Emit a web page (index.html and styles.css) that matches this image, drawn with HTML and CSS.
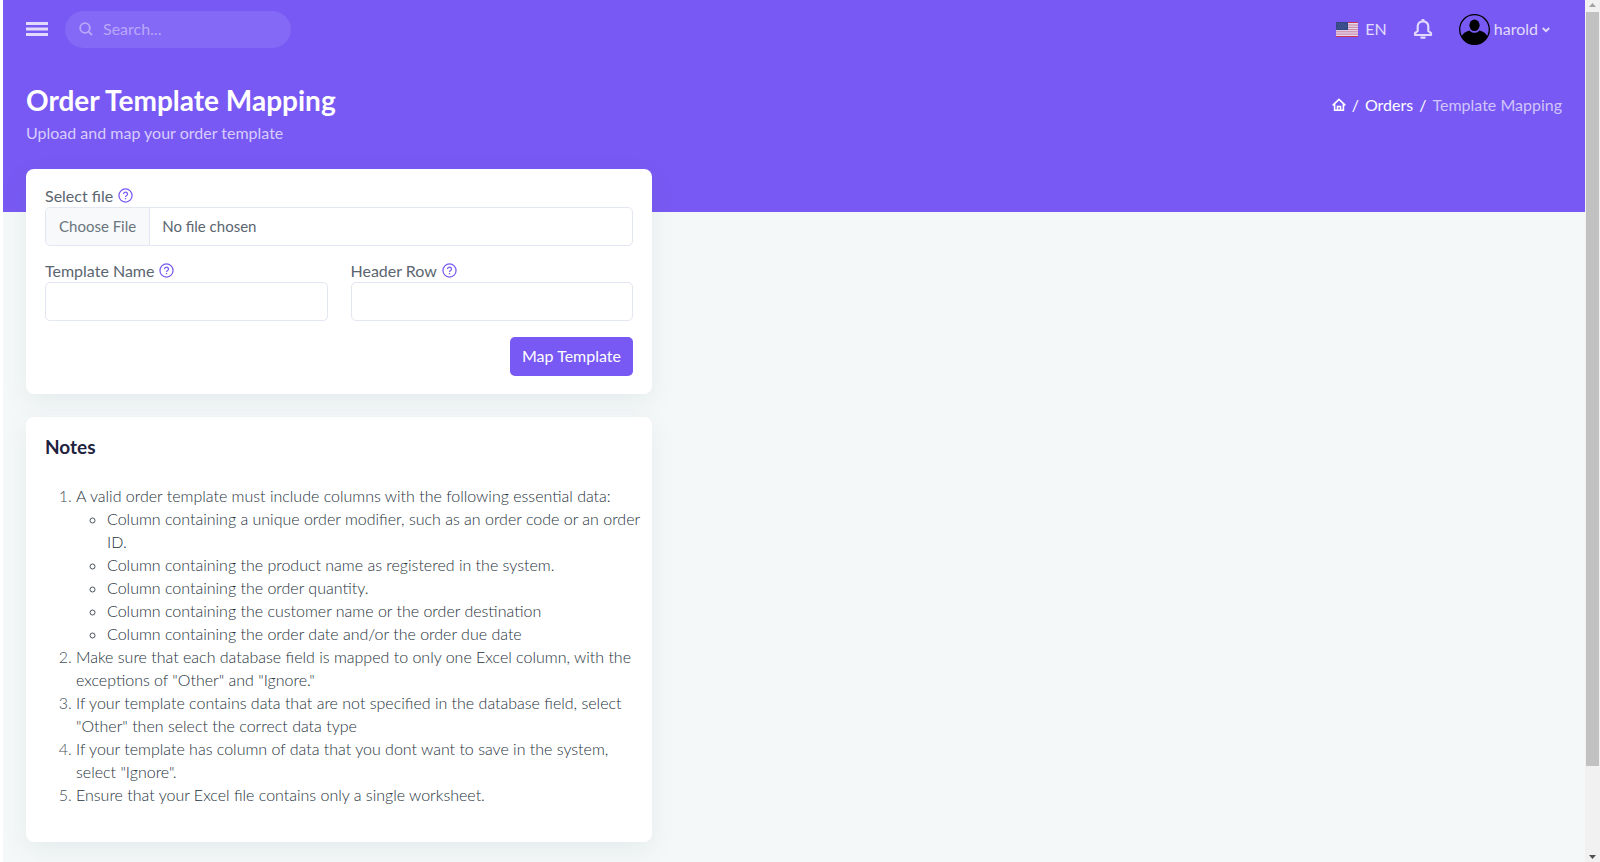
FILE: index.html
```html
<!DOCTYPE html>
<html lang="en">
<head>
  <meta charset="UTF-8">
  <meta name="viewport" content="width=device-width, initial-scale=1">
  <title>Order Template Mapping</title>
  <link rel="stylesheet" href="styles.css">
</head>
<body>

<svg class="sprite" aria-hidden="true">
  <symbol id="icon-help" viewBox="0 0 24 24">
    <circle cx="12" cy="12" r="10.5" fill="none" stroke="currentColor" stroke-width="2"/>
    <path d="M8.8 9.8a3.2 3 0 1 1 5 2.3c-1.2.8-1.8 1.2-1.8 2.3" fill="none" stroke="currentColor" stroke-width="2"/>
    <rect x="11" y="16" width="2" height="2" fill="currentColor"/>
  </symbol>
</svg>

<div class="app">
  <div class="sidebar-edge"></div>

  <div class="content">
    <header class="topbar">
      <button class="menu-btn" type="button" aria-label="Toggle menu">
        <svg width="22" height="16" viewBox="0 0 22 16"><path d="M0 2.500h22M0 8h22M0 13.500h22" stroke="currentColor" stroke-width="3"/></svg>
      </button>
      <label class="search">
        <svg width="14" height="14" viewBox="0 0 14 14" fill="none" stroke="currentColor" stroke-width="1.800"><circle cx="6" cy="6" r="4.800"/><path d="M9.600 9.600l3.400 3.400"/></svg>
        <input type="text" placeholder="Search..." aria-label="Search">
      </label>

      <div class="topbar-right">
        <button class="lang" type="button">
          <svg class="flag" width="22" height="15" viewBox="0 0 22 15">
            <rect width="22" height="15" fill="#f0e6ee"/>
            <path d="M0 .5h22M0 14.500h22" stroke="#d6303f"/>
            <path d="M0 3h22M0 5.300h22M0 7.600h22M0 9.800h22M0 12.100h22" stroke="#d08496"/>
            <rect width="12" height="8" fill="#2c4478"/>
            <path d="M1 2h10M2 4h9M1 6h10" stroke="#56699a" stroke-dasharray="1 1"/>
          </svg>
          <span>EN</span>
        </button>
        <button class="bell" type="button" aria-label="Notifications">
          <svg width="20" height="20" viewBox="0 0 20 20" fill="none" stroke="currentColor" stroke-width="2.200"><path d="M10 2.400c-3.300 0-5.300 2.200-5.300 5.200v4.400L2 14.200V16h16v-1.800L15.300 12V7.600c0-3-2-5.200-5.300-5.200z" stroke-linejoin="round"/><path d="M9.500 1.200h1M8.300 18.600h3.400" stroke-linecap="round"/></svg>
        </button>
        <button class="user" type="button">
          <svg width="31" height="31" viewBox="0 0 31 31">
            <circle cx="15.500" cy="15.500" r="14.800" fill="none" stroke="#000" stroke-width="1.300"/>
            <ellipse cx="15.500" cy="11.300" rx="5.100" ry="5.800" fill="#000"/>
            <path d="M2.500 22.500c1.200-3 4-4.800 8-6 1.300 1.500 3 2.300 5 2.300s3.700-.8 5-2.300c4 1.200 6.800 3 8 6A14.800 14.800 0 0 1 15.500 30.500 14.800 14.800 0 0 1 2.500 22.500z" fill="#000"/>
          </svg>
          <span>harold</span>
          <svg width="8" height="8" viewBox="0 0 8 8" fill="none" stroke="currentColor" stroke-width="1.800"><path d="M.8 3L4 6.200 7.200 3"/></svg>
        </button>
      </div>
    </header>

    <div class="page-head">
      <div>
        <h1>Order Template Mapping</h1>
        <p>Upload and map your order template</p>
      </div>
      <nav class="breadcrumb" aria-label="Breadcrumb">
        <a href="#" aria-label="Home"><svg width="14" height="14" viewBox="0 0 14 14" fill="none" stroke="currentColor" stroke-width="1.600"><path d="M.7 7.300L7 1.300l6.300 6M2.600 6v6.200h8.800V6"/><path d="M5.500 12V8.500h3V12"/></svg></a>
        <span>/</span>
        <a href="#">Orders</a>
        <span>/</span>
        <span class="current">Template Mapping</span>
      </nav>
    </div>

    <main class="grid">
      <form class="card">
        <div class="field">
          <label for="file">Select file <svg class="help"><use href="#icon-help"/></svg></label>
          <input class="control file" type="file" id="file">
        </div>
        <div class="field-row">
          <div class="field">
            <label for="templateName">Template Name <svg class="help"><use href="#icon-help"/></svg></label>
            <input class="control" type="text" id="templateName">
          </div>
          <div class="field">
            <label for="headerRow">Header Row <svg class="help"><use href="#icon-help"/></svg></label>
            <input class="control" type="text" id="headerRow">
          </div>
        </div>
        <button class="btn" type="button">Map Template</button>
      </form>

      <section class="card notes">
        <h2>Notes</h2>
        <ol>
          <li>A valid order template must include columns with the following essential data:
            <ul>
              <li>Column containing a unique order modifier, such as an order code or an order ID.</li>
              <li>Column containing the product name as registered in the system.</li>
              <li>Column containing the order quantity.</li>
              <li>Column containing the customer name or the order destination</li>
              <li>Column containing the order date and/or the order due date</li>
            </ul>
          </li>
          <li>Make sure that each database field is mapped to only one Excel column, with the exceptions of "Other" and "Ignore."</li>
          <li>If your template contains data that are not specified in the database field, select "Other" then select the correct data type</li>
          <li>If your template has column of data that you dont want to save in the system, select "Ignore".</li>
          <li>Ensure that your Excel file contains only a single worksheet.</li>
        </ol>
      </section>
    </main>
  </div>

  <div class="scrollbar" aria-hidden="true">
    <svg width="7" height="4" viewBox="0 0 7 4"><path d="M0 4l3.500-4L7 4z" fill="#a3a3a3"/></svg>
    <div class="track"><div class="thumb"></div></div>
    <svg width="7" height="4" viewBox="0 0 7 4"><path d="M0 0l3.500 4L7 0z" fill="#505050"/></svg>
  </div>
</div>

</body>
</html>
```
FILE: styles.css
```css
* {
  box-sizing: border-box;
}

body {
  margin: 0;
  font-family: Lato, sans-serif;
  font-size: 16px;
  line-height: 23px;
  color: #5b6670;
  background: #f4f8f9;
}

button, input {
  font: inherit;
  color: inherit;
}

button {
  border: 0;
  background: none;
  padding: 0;
  cursor: pointer;
}

a {
  color: inherit;
  text-decoration: none;
}

svg {
  flex: none;
}

.sprite {
  position: absolute;
  width: 0;
  height: 0;
}

.app {
  display: flex;
  height: 100vh;
}

.sidebar-edge {
  width: 3px;
  background: #fff;
}

/* purple band behind the header and the top of the first card */
.content {
  flex: 1;
  min-width: 0;
  padding: 0 23px 23px;
  overflow-y: auto;
  scrollbar-width: none;
  background: linear-gradient(#7859f3 212px, #f4f8f9 212px);
  background-attachment: local;
}

/* top bar */
.topbar {
  display: flex;
  align-items: center;
  height: 58px;
  color: #e1dafd;
}

.menu-btn {
  display: flex;
  margin-right: 17px;
}

.search {
  display: flex;
  align-items: center;
  gap: 10px;
  width: 226px;
  height: 37px;
  padding: 0 14px;
  border-radius: 19px;
  background: #8468f6;
  color: #b9a8fa;
}

.search input {
  flex: 1;
  min-width: 0;
  border: 0;
  padding: 0 0 2px;
  outline: 0;
  background: none;
}

.search input::placeholder {
  color: #b9a8fa;
}

.topbar-right {
  display: flex;
  align-items: center;
  margin-left: auto;
  padding-right: 12px;
}

.topbar-right button {
  display: flex;
  align-items: center;
}

.topbar-right span {
  padding-bottom: 2px;
}

.lang {
  gap: 7px;
}

.flag {
  opacity: .9;
}

.bell {
  margin: 0 26px;
}

.user {
  gap: 4px;
}

/* title and breadcrumb */
.page-head {
  display: flex;
  justify-content: space-between;
  height: 111px;
  padding-top: 25px;
  color: #fff;
}

.page-head h1 {
  margin: 0;
  font-size: 28px;
  line-height: 34px;
  font-weight: 700;
}

.page-head p {
  margin: 4px 0 0;
  color: #d7cdfc;
}

.breadcrumb {
  display: flex;
  align-items: center;
  gap: 6px;
  height: 23px;
  margin-top: 10px;
}

.breadcrumb a {
  display: flex;
}

.breadcrumb .current {
  color: #d0c5fc;
}

/* cards */
.grid {
  display: grid;
  grid-template-columns: repeat(12, 1fr);
  gap: 23px 24px;
}

.card {
  grid-column: 1 / span 5;
  display: flex;
  flex-direction: column;
  gap: 16px;
  padding: 18px 19px;
  border-radius: 8px;
  background: #fff;
  box-shadow: 0 8px 24px rgba(90, 110, 110, .09);
}

.field-row {
  display: grid;
  grid-template-columns: 1fr 1fr;
  gap: 23px;
}

.field label {
  display: flex;
  align-items: center;
  gap: 5px;
  height: 20px;
  padding-bottom: 4px;
}

.help {
  width: 15px;
  height: 15px;
  color: #7859f3;
}

.control {
  display: block;
  width: 100%;
  height: 39px;
  padding: 7px 12px;
  border: 1px solid #e3e6f3;
  border-radius: 5px;
  background: #fff;
}

.file {
  padding: 0;
  font-size: 15px;
  line-height: 36px;
}

.file::file-selector-button {
  height: 37px;
  margin: 0 12px 0 0;
  padding: 0 13px 1px;
  border: 0;
  border-right: 1px solid #e3e6f3;
  border-radius: 4px 0 0 4px;
  background: #f7f9fb;
  font: inherit;
  color: #6b757d;
}

.btn {
  align-self: flex-end;
  height: 39px;
  padding: 0 12px 2px;
  border-radius: 5px;
  background: #7859f3;
  color: #fff;
}

.notes {
  gap: 26px;
  padding-right: 12px;
}

.notes h2 {
  margin: 0;
  font-size: 19px;
  line-height: 23px;
  font-weight: 700;
  color: #1f2340;
}

.notes ol {
  margin: 0 0 18px;
  font-weight: 300;
  color: #26323b;
}

.notes ol, .notes ul {
  padding-left: 31px;
}

.notes ul {
  margin: 0;
}

.notes li::marker {
  color: #47525c;
}

/* scroll bar */
.scrollbar {
  display: flex;
  flex-direction: column;
  align-items: center;
  width: 15px;
  padding: 3px 1px;
  background: #f1f1f1;
}

.track {
  flex: 1;
  width: 100%;
  padding: 5px 0;
}

.thumb {
  height: 90%;
  background: #c1c1c1;
}
```
